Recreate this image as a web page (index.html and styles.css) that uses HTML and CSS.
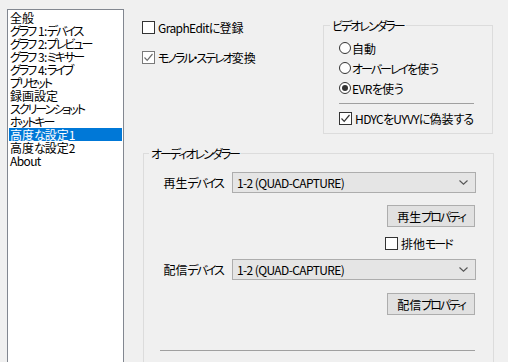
FILE: index.html
```html
<!DOCTYPE html>
<html lang="ja">
<head>
<meta charset="utf-8">
<title>設定</title>
<link rel="stylesheet" href="styles.css">
</head>
<body>
<div class="window">
  <ul class="listbox">
    <li>全般</li>
    <li><span class="k">グラフ</span> <span class="l">1:</span><span class="k">デバイス</span></li>
    <li><span class="k">グラフ</span> <span class="l">2:</span><span class="k">プレビュー</span></li>
    <li><span class="k">グラフ</span> <span class="l">3:</span><span class="k">ミキサー</span></li>
    <li><span class="k">グラフ</span> <span class="l">4:</span><span class="k">ライブ</span></li>
    <li><span class="k">プリセット</span></li>
    <li>録画設定</li>
    <li><span class="k">スクリーンショット</span></li>
    <li><span class="k">ホットキー</span></li>
    <li class="selected">高度<span class="g">な</span>設定<span class="l">1</span></li>
    <li>高度<span class="g">な</span>設定<span class="l">2</span></li>
    <li><span class="l">About</span></li>
  </ul>
  <div class="panel">
    <div class="top-row">
      <div class="checks">
        <div class="check"><span class="box"></span><span><span class="l">GraphEdit</span><span class="g">に</span>登録</span></div>
        <div class="check"><span class="box grey"><svg viewBox="0 0 11 11" width="11" height="11"><path d="M1.5 5.5 L4.2 8.3 L9.5 2" fill="none" stroke="#6d6d6d" stroke-width="1.2"/></svg></span><span><span class="k">モノラル・ステレオ</span>変換</span></div>
      </div>
      <fieldset class="group video">
        <legend><span class="k">ビデオレンダラー</span></legend>
        <div class="video-body">
          <div class="radio"><span class="circle"></span><span>自動</span></div>
          <div class="radio"><span class="circle"></span><span><span class="k">オーバーレイ</span><span class="g">を</span>使<span class="g">う</span></span></div>
          <div class="radio"><span class="circle on"></span><span><span class="l">EVR</span><span class="g">を</span>使<span class="g">う</span></span></div>
          <div class="sep short"></div>
          <div class="check"><span class="box"><svg viewBox="0 0 11 11" width="11" height="11"><path d="M1.5 5.5 L4.2 8.3 L9.5 2" fill="none" stroke="#333" stroke-width="1.2"/></svg></span><span><span class="l">HDYC</span><span class="g">を</span><span class="l">UYVY</span><span class="g">に</span>偽装<span class="g">する</span></span></div>
        </div>
      </fieldset>
    </div>
    <fieldset class="group audio">
      <legend><span class="k">オーディオレンダラー</span></legend>
      <div class="audio-body">
        <div class="label">再生<span class="k">デバイス</span></div>
        <div class="combo"><span class="l">1-2 (QUAD-CAPTURE)</span><svg class="arrow" viewBox="0 0 9 5" width="9" height="5"><path d="M0.5 0.5 L4.5 4.2 L8.5 0.5" fill="none" stroke="#555" stroke-width="1.1"/></svg></div>
        <div class="btn b1">再生<span class="k">プロパティ</span></div>
        <div class="check excl"><span class="box"></span><span>排他<span class="k">モード</span></span></div>
        <div class="label l2">配信<span class="k">デバイス</span></div>
        <div class="combo c2"><span class="l">1-2 (QUAD-CAPTURE)</span><svg class="arrow" viewBox="0 0 9 5" width="9" height="5"><path d="M0.5 0.5 L4.5 4.2 L8.5 0.5" fill="none" stroke="#555" stroke-width="1.1"/></svg></div>
        <div class="btn b2">配信<span class="k">プロパティ</span></div>
        <div class="sep long"></div>
      </div>
    </fieldset>
  </div>
</div>
</body>
</html>
```

FILE: styles.css
```css
* { box-sizing: border-box; }
html, body { margin: 0; padding: 0; }
body {
  width: 508px;
  height: 362px;
  overflow: hidden;
  background: #f0f0f0;
  font-family: "Noto Sans CJK JP", "Noto Sans", sans-serif;
  font-size: 12px;
  line-height: 13px;
  color: #000;
  font-feature-settings: "palt";
}
.k { letter-spacing: -2px; }
.g { letter-spacing: -1px; }
.l { letter-spacing: -0.6px; }
.window {
  display: flex;
  align-items: flex-start;
  padding: 9px 0 0 7px;
}
.listbox {
  list-style: none;
  margin: 0;
  padding: 1px 1px;
  width: 117px;
  height: 420px;
  background: #fff;
  border: 1px solid #828790;
  flex: none;
}
.listbox li {
  height: 13px;
  line-height: 13px;
  padding-left: 1px;
  white-space: nowrap;
}
.listbox li.selected {
  background: #0078d7;
  color: #fff;
}
.panel {
  margin-left: 18px;
  display: flex;
  flex-direction: column;
}
.top-row {
  display: flex;
  align-items: flex-start;
}
.checks {
  width: 181px;
  padding-top: 12px;
  display: flex;
  flex-direction: column;
  gap: 17px;
}
.check {
  display: flex;
  align-items: center;
  gap: 3px;
  height: 13px;
  white-space: nowrap;
}
.box {
  width: 13px;
  height: 13px;
  border: 1px solid #333;
  background: #fff;
  display: flex;
  align-items: center;
  justify-content: center;
  flex: none;
}
.box.grey { border-color: #7a7a7a; }
.group {
  margin: 0;
  padding: 0;
  border: 1px solid #dcdcdc;
  min-width: 0;
}
.group legend {
  padding: 0 2px;
  line-height: 13px;
  height: 13px;
}
.video {
  margin-top: 10px;
  width: 170px;
  height: 115px;
}
.video legend { margin-left: 6px; }
.video-body {
  padding: 6px 0 0 15px;
  display: flex;
  flex-direction: column;
}
.radio {
  height: 20px;
  display: flex;
  align-items: center;
  gap: 1px;
  white-space: nowrap;
}
.circle {
  width: 12px;
  height: 12px;
  border: 1px solid #333;
  border-radius: 50%;
  background: #fff;
  display: flex;
  align-items: center;
  justify-content: center;
  flex: none;
}
.circle.on::after {
  content: "";
  width: 6px;
  height: 6px;
  border-radius: 50%;
  background: #333;
}
.sep {
  height: 1px;
  background: #a0a0a0;
}
.sep.short {
  width: 135px;
  margin: 5px 0 8px;
}
.audio {
  margin: 13px 0 0 1px;
  width: 351px;
  height: 260px;
}
.audio legend { margin-left: 5px; }
.audio-body {
  padding: 12px 0 0 9px;
  display: grid;
  grid-template-columns: 70px 244px;
  column-gap: 9px;
  align-items: center;
}
.label {
  text-align: right;
  white-space: nowrap;
  grid-column: 1;
}
.combo {
  grid-column: 2;
  height: 21px;
  background: #e5e5e5;
  border: 1px solid #adadad;
  display: flex;
  align-items: center;
  justify-content: space-between;
  padding: 0 7px 0 4px;
  white-space: nowrap;
}
.btn {
  grid-column: 2;
  justify-self: end;
  margin-right: 1px;
  width: 88px;
  height: 22px;
  background: #e1e1e1;
  border: 1px solid #adadad;
  display: flex;
  align-items: center;
  justify-content: center;
  white-space: nowrap;
}
.b1 { margin-top: 12px; }
.excl {
  grid-column: 2;
  margin: 10px 0 0 153px;
}
.l2, .c2 { margin-top: 9px; }
.b2 { margin-top: 13px; }
.sep.long {
  grid-column: 1 / span 2;
  margin: 35px 0 0 7px;
  width: 315px;
}
```
